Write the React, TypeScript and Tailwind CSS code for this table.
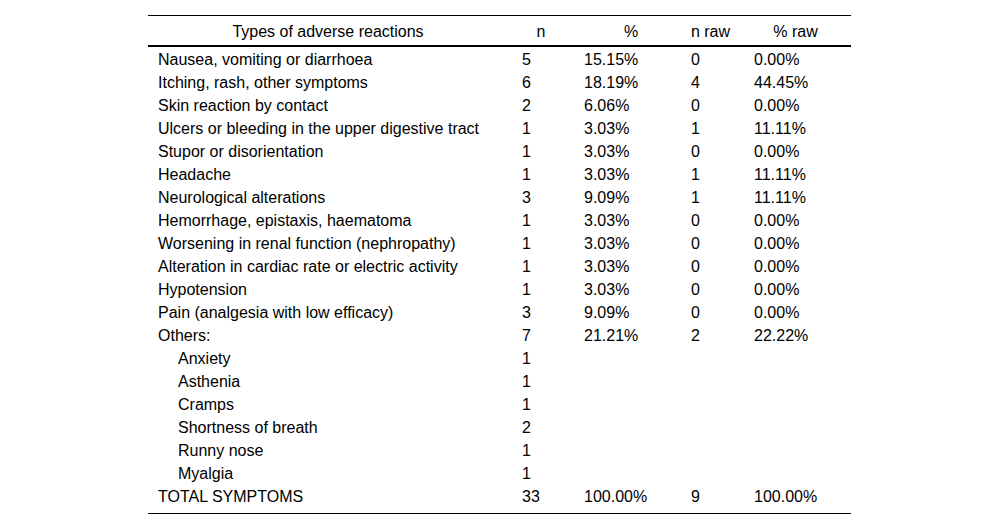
import React from "react";

type Row = { label: string; n: string; p: string; nr: string; pr: string; indent?: boolean };

const rows: Row[] = [
  { label: "Nausea, vomiting or diarrhoea", n: "5", p: "15.15%", nr: "0", pr: "0.00%" },
  { label: "Itching, rash, other symptoms", n: "6", p: "18.19%", nr: "4", pr: "44.45%" },
  { label: "Skin reaction by contact", n: "2", p: "6.06%", nr: "0", pr: "0.00%" },
  { label: "Ulcers or bleeding in the upper digestive tract", n: "1", p: "3.03%", nr: "1", pr: "11.11%" },
  { label: "Stupor or disorientation", n: "1", p: "3.03%", nr: "0", pr: "0.00%" },
  { label: "Headache", n: "1", p: "3.03%", nr: "1", pr: "11.11%" },
  { label: "Neurological alterations", n: "3", p: "9.09%", nr: "1", pr: "11.11%" },
  { label: "Hemorrhage, epistaxis, haematoma", n: "1", p: "3.03%", nr: "0", pr: "0.00%" },
  { label: "Worsening in renal function (nephropathy)", n: "1", p: "3.03%", nr: "0", pr: "0.00%" },
  { label: "Alteration in cardiac rate or electric activity", n: "1", p: "3.03%", nr: "0", pr: "0.00%" },
  { label: "Hypotension", n: "1", p: "3.03%", nr: "0", pr: "0.00%" },
  { label: "Pain (analgesia with low efficacy)", n: "3", p: "9.09%", nr: "0", pr: "0.00%" },
  { label: "Others:", n: "7", p: "21.21%", nr: "2", pr: "22.22%" },
  { label: "Anxiety", n: "1", p: "", nr: "", pr: "", indent: true },
  { label: "Asthenia", n: "1", p: "", nr: "", pr: "", indent: true },
  { label: "Cramps", n: "1", p: "", nr: "", pr: "", indent: true },
  { label: "Shortness of breath", n: "2", p: "", nr: "", pr: "", indent: true },
  { label: "Runny nose", n: "1", p: "", nr: "", pr: "", indent: true },
  { label: "Myalgia", n: "1", p: "", nr: "", pr: "", indent: true },
  { label: "TOTAL SYMPTOMS", n: "33", p: "100.00%", nr: "9", pr: "100.00%" },
];

const cols = "grid grid-cols-[364px_62px_107px_63px_107px]";

export default function App() {
  return (
    <div
      className="min-h-[530px] bg-white pt-[15px] text-[16px] text-black"
      style={{ fontFamily: '"Liberation Sans", Arial, sans-serif' }}
    >
      <div className="ml-[148px] w-[703px] border-t border-b border-black pb-[6px]">
        <div className={`${cols} h-[31px] items-center border-b-2 border-black pt-[2px] text-center`}>
          <div className="pr-[4px]">Types of adverse reactions</div>
          <div className="pr-[4px]">n</div>
          <div className="pl-[7px]">%</div>
          <div className="pr-[4px]">n raw</div>
          <div className="pr-[4px]">% raw</div>
        </div>
        {rows.map((r, i) => (
          <div key={i} className={`${cols} h-[23px] items-center pt-[3px] leading-[20px]`}>
            <div className={r.indent ? "pl-[30px]" : "pl-[10px]"}>{r.label}</div>
            <div className="pl-[10px]">{r.n}</div>
            <div className="pl-[10px]">{r.p}</div>
            <div className="pl-[10px]">{r.nr}</div>
            <div className="pl-[10px]">{r.pr}</div>
          </div>
        ))}
      </div>
    </div>
  );
}
